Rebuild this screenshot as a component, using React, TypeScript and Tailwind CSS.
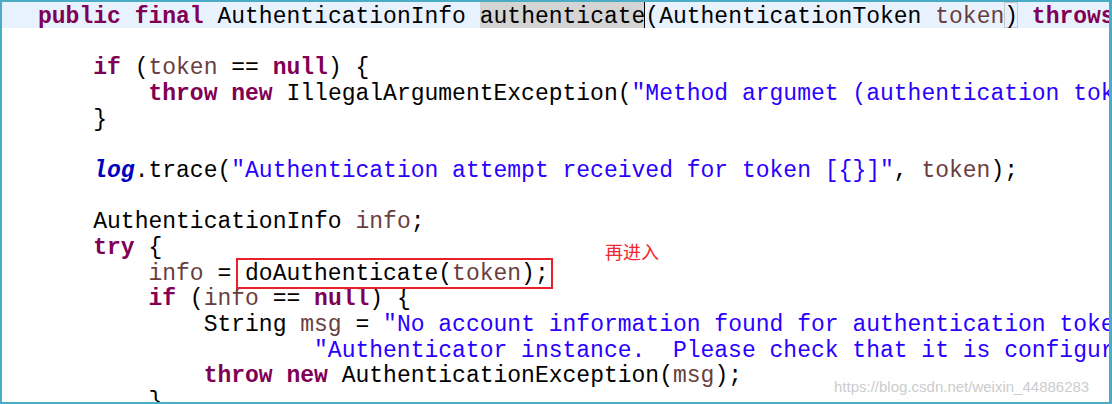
import React from 'react';

const K: React.FC<{ children: React.ReactNode }> = ({ children }) => (
  <span className="font-bold text-[#7f0055]">{children}</span>
);
const S: React.FC<{ children: React.ReactNode }> = ({ children }) => (
  <span className="text-[#2a00ff]">{children}</span>
);
const V: React.FC<{ children: React.ReactNode }> = ({ children }) => (
  <span className="text-[#6a3e3e]">{children}</span>
);

const Line: React.FC<{ children?: React.ReactNode; current?: boolean }> = ({ children, current }) => (
  <div className={`h-[25.67px] pl-[36px] ${current ? 'bg-[#e8f2fe]' : ''}`}>
    <div className="relative top-[3px]">{children ?? ' '}</div>
  </div>
);

export default function App() {
  return (
    <div className="relative w-[1112px] h-[404px] overflow-hidden bg-white border-[#4bacc6] border-l-2 border-t-2 border-b-2 border-r-[3px]">
      <div className="whitespace-pre text-[23px] leading-[25.67px] text-black [font-family:'Liberation_Mono','Courier_New',monospace]">
        <Line current>
          <K>public</K> <K>final</K> AuthenticationInfo{' '}
          <span className="relative -top-[3px] inline-block h-[25.67px] bg-[#d4d4d4] shadow-[inset_-1px_0_0_#000]">
            <span className="relative top-[3px]">authenticate</span>
          </span>
          (AuthenticationToken <V>token</V>
          <span className="relative -top-[3px] inline-block h-[25.67px] shadow-[inset_0_0_0_1px_#c8c8c8]">
            <span className="relative top-[3px]">)</span>
          </span>{' '}
          <K>throws</K>
        </Line>
        <Line />
        <Line>
          {'    '}<K>if</K> (<V>token</V> == <K>null</K>) {'{'}
        </Line>
        <Line>
          {'        '}<K>throw</K> <K>new</K> IllegalArgumentException(<S>"Method argumet (authentication token) can not be null."</S>);
        </Line>
        <Line>{'    }'}</Line>
        <Line />
        <Line>
          {'    '}<span className="font-bold italic text-[#0000c0]">log</span>.trace(<S>"Authentication attempt received for token [{'{}'}]"</S>, <V>token</V>);
        </Line>
        <Line />
        <Line>
          {'    '}AuthenticationInfo <V>info</V>;
        </Line>
        <Line>
          {'    '}<K>try</K> {'{'}
        </Line>
        <Line>
          {'        '}<V>info</V> = doAuthenticate(<V>token</V>);
        </Line>
        <Line>
          {'        '}<K>if</K> (<V>info</V> == <K>null</K>) {'{'}
        </Line>
        <Line>
          {'            '}String <V>msg</V> = <S>"No account information found for authentication token ["</S> + <V>token</V> + <S>"]. "</S> +
        </Line>
        <Line>
          {'                    '}<S>"Authenticator instance.  Please check that it is configured correctly."</S>;
        </Line>
        <Line>
          {'            '}<K>throw</K> <K>new</K> AuthenticationException(<V>msg</V>);
        </Line>
        <Line>{'        }'}</Line>
      </div>

      {/* annotation */}
      <div className="absolute left-[234px] top-[256px] w-[317px] h-[31px] border-2 border-[#e8202a]" />
      <div className="absolute left-[603px] top-[238px] text-[18px] leading-[22px] text-[#f0282d] [font-family:'Noto_Sans_CJK_SC',sans-serif]">
        再进入
      </div>
      <div className="absolute left-[832px] top-[376px] text-[15px] leading-[18px] text-[#cccccc] [font-family:'Liberation_Sans',Arial,sans-serif]">
        https://blog.csdn.net/weixin_44886283
      </div>
    </div>
  );
}
